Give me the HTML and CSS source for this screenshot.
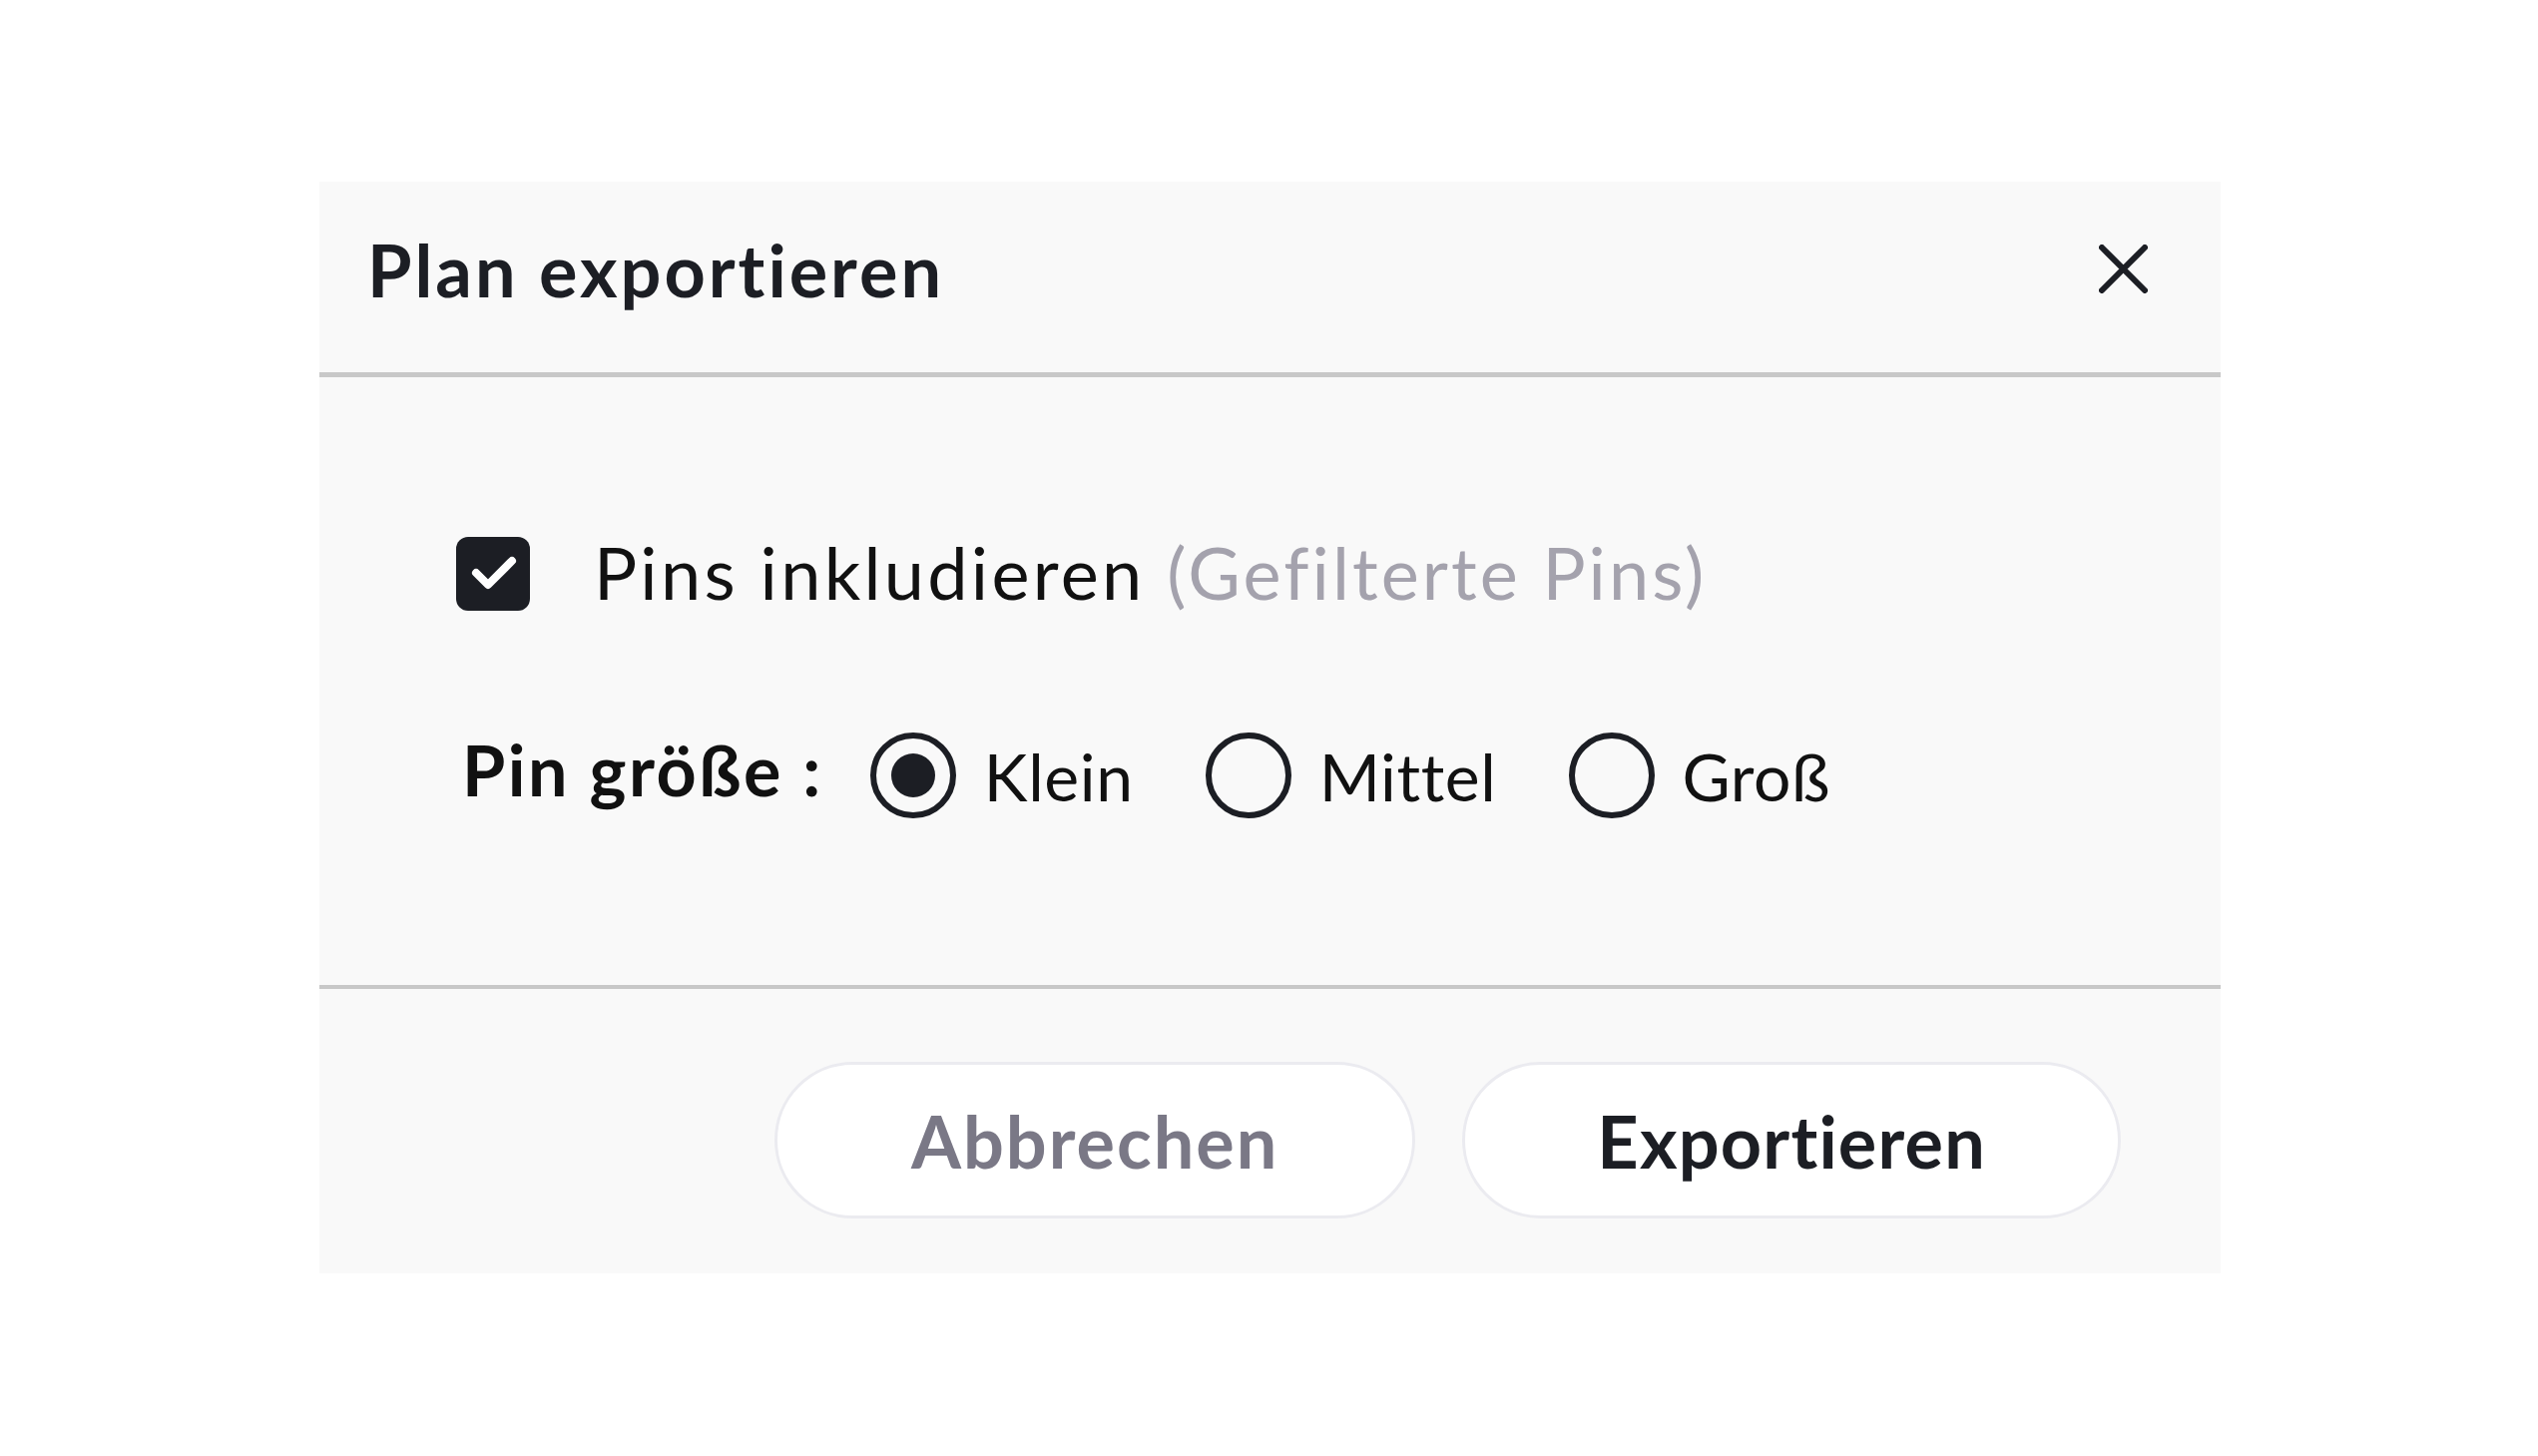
FILE: index.html
```html
<!DOCTYPE html>
<html lang="de">
<head>
<meta charset="utf-8">
<title>Plan exportieren</title>
<link rel="stylesheet" href="styles.css">
</head>
<body>
<div class="dialog">
  <div class="dialog-header">
    <h1 class="dialog-title">Plan exportieren</h1>
    <button class="close-btn" aria-label="Schließen">
      <svg width="49" height="49" viewBox="0 0 49 49"><path d="M3 3 L46 46 M46 3 L3 46" stroke="#1c1e24" stroke-width="6" stroke-linecap="round" fill="none"/></svg>
    </button>
  </div>
  <div class="dialog-body">
    <label class="check-row">
      <span class="checkbox">
        <svg width="74" height="74" viewBox="0 0 74 74"><path d="M20 36 L32 48 L56 24" stroke="#fff" stroke-width="8" stroke-linecap="round" stroke-linejoin="round" fill="none"/></svg>
      </span>
      <span class="check-label">Pins inkludieren <span class="muted">(Gefilterte Pins)</span></span>
    </label>
    <div class="size-row">
      <span class="size-label">Pin größe :</span>
      <label class="radio-opt"><span class="radio checked"></span><span class="radio-label">Klein</span></label>
      <label class="radio-opt"><span class="radio"></span><span class="radio-label">Mittel</span></label>
      <label class="radio-opt"><span class="radio"></span><span class="radio-label">Groß</span></label>
    </div>
  </div>
  <div class="dialog-footer">
    <button class="btn btn-cancel">Abbrechen</button>
    <button class="btn btn-primary">Exportieren</button>
  </div>
</div>
</body>
</html>
```

FILE: styles.css
```css
html, body {
  margin: 0;
  padding: 0;
  background: #ffffff;
}

body {
  font-family: "Lato", "Liberation Sans", sans-serif;
  color: #1c1e24;
  font-variant-ligatures: none;
}

.dialog {
  margin-left: 320px;
  margin-top: 182px;
  width: 1905px;
  background: #f9f9f9;
  display: flex;
  flex-direction: column;
}

.dialog-header {
  height: 191px;
  border-bottom: 5px solid #c8c8c8;
  display: flex;
  align-items: center;
  justify-content: space-between;
  padding: 0 73px 0 48px;
}

.dialog-title {
  margin: -16px 0 0 0;
  font-size: 72px;
  font-weight: 700;
  color: #1c1e24;
  letter-spacing: 3px;
  font-variant-ligatures: none;
}

.close-btn {
  background: none;
  border: 0;
  padding: 0;
  width: 49px;
  height: 49px;
  display: flex;
  margin-top: -16px;
}

.dialog-body {
  height: 613px;
  box-sizing: border-box;
  padding: 160px 0 0 137px;
  border-bottom: 4px solid #c8c8c8;
  display: flex;
  flex-direction: column;
  gap: 122px;
}

.check-row {
  display: flex;
  align-items: center;
  gap: 64px;
  height: 74px;
}

.checkbox {
  width: 74px;
  height: 74px;
  border-radius: 12px;
  background: #1c1e24;
  display: flex;
  flex-shrink: 0;
}

.check-label {
  font-size: 72px;
  font-weight: 400;
  color: #111111;
  letter-spacing: 3.3px;
  margin-top: -4px;
}

.muted {
  color: #a4a2ad;
  letter-spacing: 3.1px;
}

.size-row {
  display: flex;
  align-items: center;
  height: 86px;
  margin-left: 6px;
}

.size-label {
  font-size: 70px;
  font-weight: 700;
  color: #111111;
  letter-spacing: 2.5px;
  margin-right: 47px;
  margin-top: -12px;
}

.radio-opt {
  display: flex;
  align-items: center;
  gap: 28px;
  margin-right: 72px;
}

.radio {
  width: 86px;
  height: 86px;
  box-sizing: border-box;
  border: 6px solid #1c1e24;
  border-radius: 50%;
  display: flex;
  align-items: center;
  justify-content: center;
  flex-shrink: 0;
}

.radio.checked::after {
  content: "";
  width: 44px;
  height: 44px;
  border-radius: 50%;
  background: #1c1e24;
}

.radio-label {
  font-size: 66px;
  font-weight: 400;
  color: #111111;
  letter-spacing: 0.6px;
}

.dialog-footer {
  height: 285px;
  box-sizing: border-box;
  padding: 73px 100px 0 0;
  display: flex;
  justify-content: flex-end;
  align-items: flex-start;
  gap: 47px;
}

.btn {
  height: 157px;
  border-radius: 79px;
  background: #ffffff;
  border: 3px solid #ebebf0;
  padding: 0 134px;
  font-family: "Lato", "Liberation Sans", sans-serif;
  font-size: 72px;
  font-weight: 700;
  font-variant-ligatures: none;
}

.btn-cancel {
  color: #7a7886;
  letter-spacing: 2px;
}

.btn-primary {
  color: #1c1e24;
  letter-spacing: 1.2px;
  padding: 0 132px;
}
```
